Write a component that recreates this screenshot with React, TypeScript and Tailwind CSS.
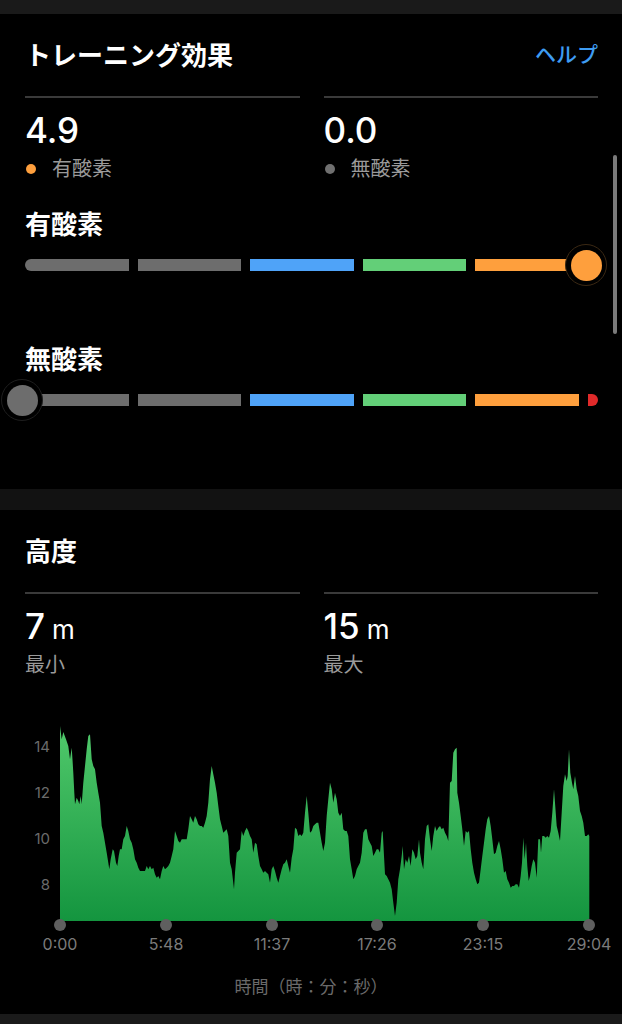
import React from 'react';

type Pt = [number, number];

// traced outline of the elevation chart, in 3x crop coordinates
const traceA: Pt[] = [
  [60, 30], [65, 70], [70, 48], [78, 70], [85, 90], [90, 130], [95, 95], [98, 140], [100, 170], [103, 230],
  [105, 265], [110, 245], [115, 255], [118, 265], [122, 240], [125, 265], [130, 200], [135, 150], [140, 100],
  [145, 60], [150, 55], [155, 130], [160, 150], [165, 160], [170, 200], [175, 230], [180, 260], [185, 330],
  [190, 350], [195, 380], [200, 410], [205, 440], [208, 460], [212, 430], [218, 400], [222, 405], [228, 440],
  [232, 450], [236, 420], [240, 400], [245, 400], [250, 370], [255, 360], [260, 330], [265, 345], [270, 370],
  [275, 380], [280, 400], [285, 430], [290, 440], [295, 455], [300, 465], [310, 465], [315, 465], [320, 450],
  [325, 460], [330, 450], [335, 460], [340, 455], [345, 475], [350, 485], [355, 480], [360, 490], [365, 465],
  [370, 450], [375, 460], [380, 455], [385, 450], [390, 440], [395, 420], [400, 400], [405, 345], [410, 360],
  [415, 375], [420, 380], [425, 370], [430, 370], [440, 370], [445, 340], [450, 300], [455, 310], [460, 320],
  [465, 300], [470, 310], [475, 325], [480, 330], [485, 330], [490, 335], [495, 320], [500, 300], [505, 260],
  [510, 190], [515, 150], [520, 175], [525, 200], [530, 230], [535, 270], [540, 310], [545, 330], [550, 350],
  [555, 345], [560, 340], [565, 360],
];

const traceB: Pt[] = [
  [0, 440], [5, 460], [12, 520], [15, 470], [20, 410], [25, 405], [30, 400], [35, 345], [40, 360], [45, 345],
  [50, 335], [55, 345], [60, 360], [65, 370], [70, 410], [75, 380], [80, 385], [85, 420], [90, 450], [95, 460],
  [100, 470], [105, 465], [110, 470], [115, 475], [120, 500], [125, 460], [130, 450], [135, 465], [140, 485],
  [145, 500], [150, 480], [155, 460], [160, 445], [165, 440], [170, 430], [175, 450], [180, 470], [185, 425],
  [190, 400], [195, 335], [200, 340], [205, 360], [210, 355], [215, 360], [220, 350], [225, 290], [230, 240],
  [235, 290], [240, 350], [245, 345], [250, 330], [255, 325], [260, 320], [265, 320], [270, 350], [275, 380],
  [280, 405], [285, 380], [290, 300], [295, 250], [300, 200], [305, 220], [310, 260], [315, 230], [320, 250],
  [325, 290], [330, 300], [335, 290], [340, 340], [345, 345], [350, 345], [355, 360], [360, 430], [365, 460],
  [370, 490], [375, 480], [380, 460], [385, 450], [390, 440], [395, 410], [400, 350], [405, 340], [410, 340],
  [415, 370], [420, 380], [425, 390], [430, 420], [435, 410], [440, 400], [445, 400], [450, 410], [455, 350],
  [458, 345], [462, 420], [465, 475], [470, 480], [475, 490], [480, 500], [485, 520], [490, 560], [495, 600],
  [500, 560], [505, 490], [510, 460], [515, 420], [518, 390], [522, 460], [527, 430], [532, 440], [537, 420],
  [542, 450], [547, 400], [552, 410], [557, 430], [562, 420], [567, 370],
];

const traceC: Pt[] = [
  [0, 410], [5, 440], [10, 460], [15, 370], [20, 330], [25, 325], [30, 370], [35, 405], [40, 360], [45, 330],
  [50, 345], [55, 335], [60, 330], [65, 340], [70, 335], [75, 350], [80, 360], [85, 375], [90, 200], [95, 195],
  [100, 110], [105, 100], [110, 95], [112, 230], [117, 260], [122, 300], [127, 340], [132, 390], [137, 345],
  [142, 350], [147, 345], [152, 400], [157, 440], [162, 470], [167, 490], [172, 505], [177, 500], [182, 460],
  [187, 420], [192, 380], [197, 340], [202, 310], [207, 300], [212, 330], [217, 370], [222, 415], [227, 410],
  [232, 390], [237, 375], [242, 400], [247, 430], [252, 470], [257, 465], [262, 490], [267, 500], [272, 515],
  [277, 510], [282, 510], [287, 505], [292, 505], [297, 515], [302, 480], [306, 440], [310, 365], [314, 430],
  [318, 380], [322, 450], [326, 495], [330, 480], [335, 450], [340, 430], [345, 440], [350, 485], [355, 370],
  [360, 370], [363, 410], [367, 360], [372, 360], [377, 365], [382, 360], [387, 365], [392, 345], [397, 290],
  [402, 220], [405, 260], [410, 330], [415, 350], [420, 375], [425, 290], [430, 210], [435, 175], [440, 195],
  [443, 180], [447, 100], [451, 170], [456, 200], [460, 220], [465, 180], [470, 220], [475, 240], [480, 285],
  [485, 300], [490, 320], [495, 360], [500, 360], [505, 355], [508, 360],
];

const BASE = 920;

function toPage(trace: Pt[], ox: number): string[] {
  return trace.map(([x, y]) => `${(ox + x / 3).toFixed(1)},${(715 + y / 3).toFixed(1)}`);
}

const areaPath =
  `M60,${BASE} L` +
  [...toPage(traceA, 40), ...toPage(traceB, 230), ...toPage(traceC, 420)].join(' L') +
  ` L589.3,${BASE} Z`;

const xTicks = [
  { x: 60, label: '0:00' },
  { x: 166, label: '5:48' },
  { x: 272, label: '11:37' },
  { x: 377, label: '17:26' },
  { x: 483, label: '23:15' },
  { x: 589, label: '29:04' },
];

const yTicks = [
  { y: 745, label: '14' },
  { y: 791, label: '12' },
  { y: 837, label: '10' },
  { y: 883, label: '8' },
];

function EffectBar({ value }: { value: 'max' | 'min' }) {
  return (
    <div className="relative h-[44px] flex items-center">
      <div className="flex w-full gap-[9px]">
        <div className="flex-1 h-[12px] rounded-l-full bg-[#6d6d6d]" />
        <div className="flex-1 h-[12px] bg-[#6d6d6d]" />
        <div className="flex-1 h-[12px] bg-[#4fa3f8]" />
        <div className="flex-1 h-[12px] bg-[#63cf78]" />
        <div className="flex-1 h-[12px] bg-[#fe9f3d]" />
        <div className="w-[10px] h-[12px] rounded-r-full bg-[#e02a2a]" />
      </div>
      {value === 'max' ? (
        <div className="absolute left-[540px] top-[1px] w-[42px] h-[42px] rounded-full bg-black border border-[#3a2813] flex items-center justify-center">
          <div className="w-[31px] h-[31px] rounded-full bg-[#fe9f3d]" />
        </div>
      ) : (
        <div className="absolute left-[-24px] top-[1px] w-[42px] h-[42px] rounded-full bg-black border border-[#1e1e1e] flex items-center justify-center">
          <div className="w-[31px] h-[31px] rounded-full bg-[#6d6d6d]" />
        </div>
      )}
    </div>
  );
}

function Stat({ value, unit, label, dot }: { value: string; unit?: string; label: string; dot?: string }) {
  return (
    <div className="flex-1">
      <div className="h-[2px] bg-[#3a3a3a]" />
      <div className="pt-[13px] flex items-baseline h-[52px]">
        <span className="text-[35px] leading-[38px] font-medium text-white">{value}</span>
        {unit && <span className="ml-[7px] text-[26px] leading-[38px] text-white">{unit}</span>}
      </div>
      <div className="mt-[6px] h-[26px] flex items-center">
        {dot && <span className={`w-[10px] h-[10px] rounded-full mr-[16px] ml-[1px] ${dot}`} />}
        <span className="text-[20px] text-[#9a9a9a]">{label}</span>
      </div>
    </div>
  );
}

export default function App() {
  return (
    <div className="w-[622px] h-[1024px] bg-black overflow-hidden font-[Inter,'Noto_Sans_CJK_JP',sans-serif]">
      <div className="h-[14px] bg-[#1a1a1a]" />

      <section className="relative pl-[25px] pr-[24px] pb-[67px]">
        <div className="h-[82px] flex items-center justify-between">
          <h1 className="text-[26px] font-bold text-white">トレーニング効果</h1>
          <span className="text-[21px] font-medium text-[#3e9cf2]">ヘルプ</span>
        </div>
        <div className="flex gap-[24px]">
          <Stat value="4.9" label="有酸素" dot="bg-[#fe9f3d]" />
          <Stat value="0.0" label="無酸素" dot="bg-[#707070]" />
        </div>

        <h2 className="mt-[26px] h-[32px] flex items-center text-[26px] font-bold text-white">有酸素</h2>
        <div className="mt-[3px]">
          <EffectBar value="max" />
        </div>

        <h2 className="mt-[56px] h-[32px] flex items-center text-[26px] font-bold text-white">無酸素</h2>
        <div className="mt-[3px]">
          <EffectBar value="min" />
        </div>

        <div className="absolute right-[5px] top-[141px] w-[4px] h-[179px] rounded-full bg-[#7a7a7a]" />
      </section>

      <div className="h-[21px] bg-[#121212]" />

      <section>
        <div className="pl-[25px] pr-[24px]">
          <div className="h-[82px] flex items-center">
            <h1 className="text-[26px] font-bold text-white">高度</h1>
          </div>
          <div className="flex gap-[24px]">
            <Stat value="7" unit="m" label="最小" />
            <Stat value="15" unit="m" label="最大" />
          </div>
        </div>

        <svg className="block mt-[23px]" width={622} height={260} viewBox="0 700 622 260">
          <defs>
            <linearGradient id="alt" x1="0" y1="720" x2="0" y2={BASE} gradientUnits="userSpaceOnUse">
              <stop offset="0" stopColor="#52ca6c" />
              <stop offset="1" stopColor="#14953f" />
            </linearGradient>
          </defs>
          <path d={areaPath} fill="url(#alt)" />
          {yTicks.map((t) => (
            <text key={t.label} x={50} y={t.y} textAnchor="end" dominantBaseline="central" fontSize={15} fill="#6b6b6b">
              {t.label}
            </text>
          ))}
          {xTicks.map((t) => (
            <g key={t.label}>
              <circle cx={t.x} cy={924} r={6} fill="#5f5f5f" />
              <text x={t.x} y={943} textAnchor="middle" dominantBaseline="central" fontSize={16} fill="#7b7b7b">
                {t.label}
              </text>
            </g>
          ))}
        </svg>

        <div className="h-[53px] flex items-center justify-center">
          <span className="text-[17px] text-[#6a6a6a]">時間（時：分：秒）</span>
        </div>
      </section>

      <div className="h-[11px] bg-[#1a1a1a]" />
    </div>
  );
}
